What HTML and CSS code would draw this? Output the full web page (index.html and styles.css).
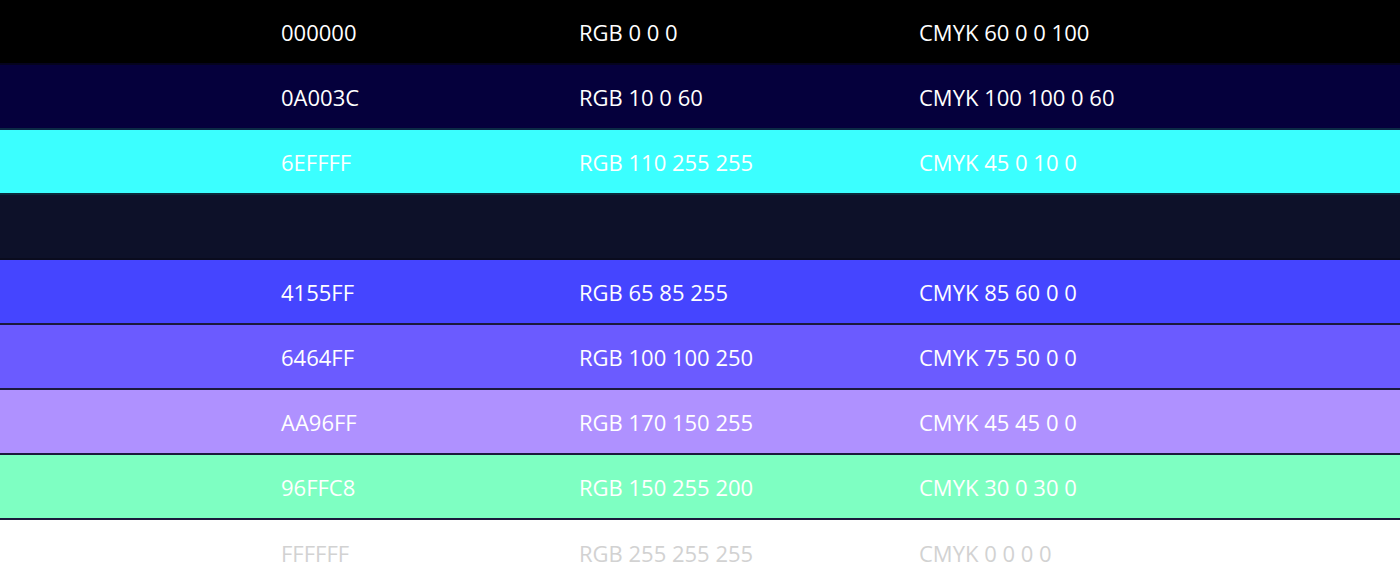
FILE: index.html
```html
<!DOCTYPE html>
<html lang="en">
<head>
<meta charset="utf-8">
<title>Palette</title>
<link rel="stylesheet" href="styles.css">
</head>
<body>
<div class="palette">
  <div class="row c-black"><span>000000</span><span>RGB 0 0 0</span><span>CMYK 60 0 0 100</span></div>
  <div class="row c-navy"><span>0A003C</span><span>RGB 10 0 60</span><span>CMYK 100 100 0 60</span></div>
  <div class="row c-cyan"><span>6EFFFF</span><span>RGB 110 255 255</span><span>CMYK 45 0 10 0</span></div>
  <div class="row c-dark"><span></span><span></span><span></span></div>
  <div class="row c-blue"><span>4155FF</span><span>RGB 65 85 255</span><span>CMYK 85 60 0 0</span></div>
  <div class="row c-violet"><span>6464FF</span><span>RGB 100 100 250</span><span>CMYK 75 50 0 0</span></div>
  <div class="row c-lavender"><span>AA96FF</span><span>RGB 170 150 255</span><span>CMYK 45 45 0 0</span></div>
  <div class="row c-mint"><span>96FFC8</span><span>RGB 150 255 200</span><span>CMYK 30 0 30 0</span></div>
  <div class="row c-white"><span>FFFFFF</span><span>RGB 255 255 255</span><span>CMYK 0 0 0 0</span></div>
</div>
</body>
</html>
```

FILE: styles.css
```css
html, body {
  margin: 0;
  padding: 0;
  background: #ffffff;
}
body {
  font-family: "Open Sans", "Liberation Sans", sans-serif;
}
.palette {
  display: flex;
  flex-direction: column;
}
.row {
  display: grid;
  grid-template-columns: 298px 340px 1fr;
  align-items: center;
  box-sizing: border-box;
  height: 65px;
  padding-left: 281px;
  padding-top: 1px;
  border-bottom: 2px solid #1b1a3c;
  color: #ffffff;
  font-size: 22px;
}
.c-black { background: #000000; border-bottom-color: #05031f; }
.c-navy { background: #05003c; border-bottom-color: #0b2a46; }
.c-cyan { background: #3bffff; border-bottom-color: #0b2a3a; }
.c-dark { background: #0d1129; border-bottom-color: #0a0c1e; }
.c-blue { background: #4545ff; }
.c-violet { background: #6b5bff; }
.c-lavender { background: #af91ff; }
.c-mint { background: #7effc2; }
.c-white { background: #ffffff; color: #d2d2d2; border-bottom: none; }
```
